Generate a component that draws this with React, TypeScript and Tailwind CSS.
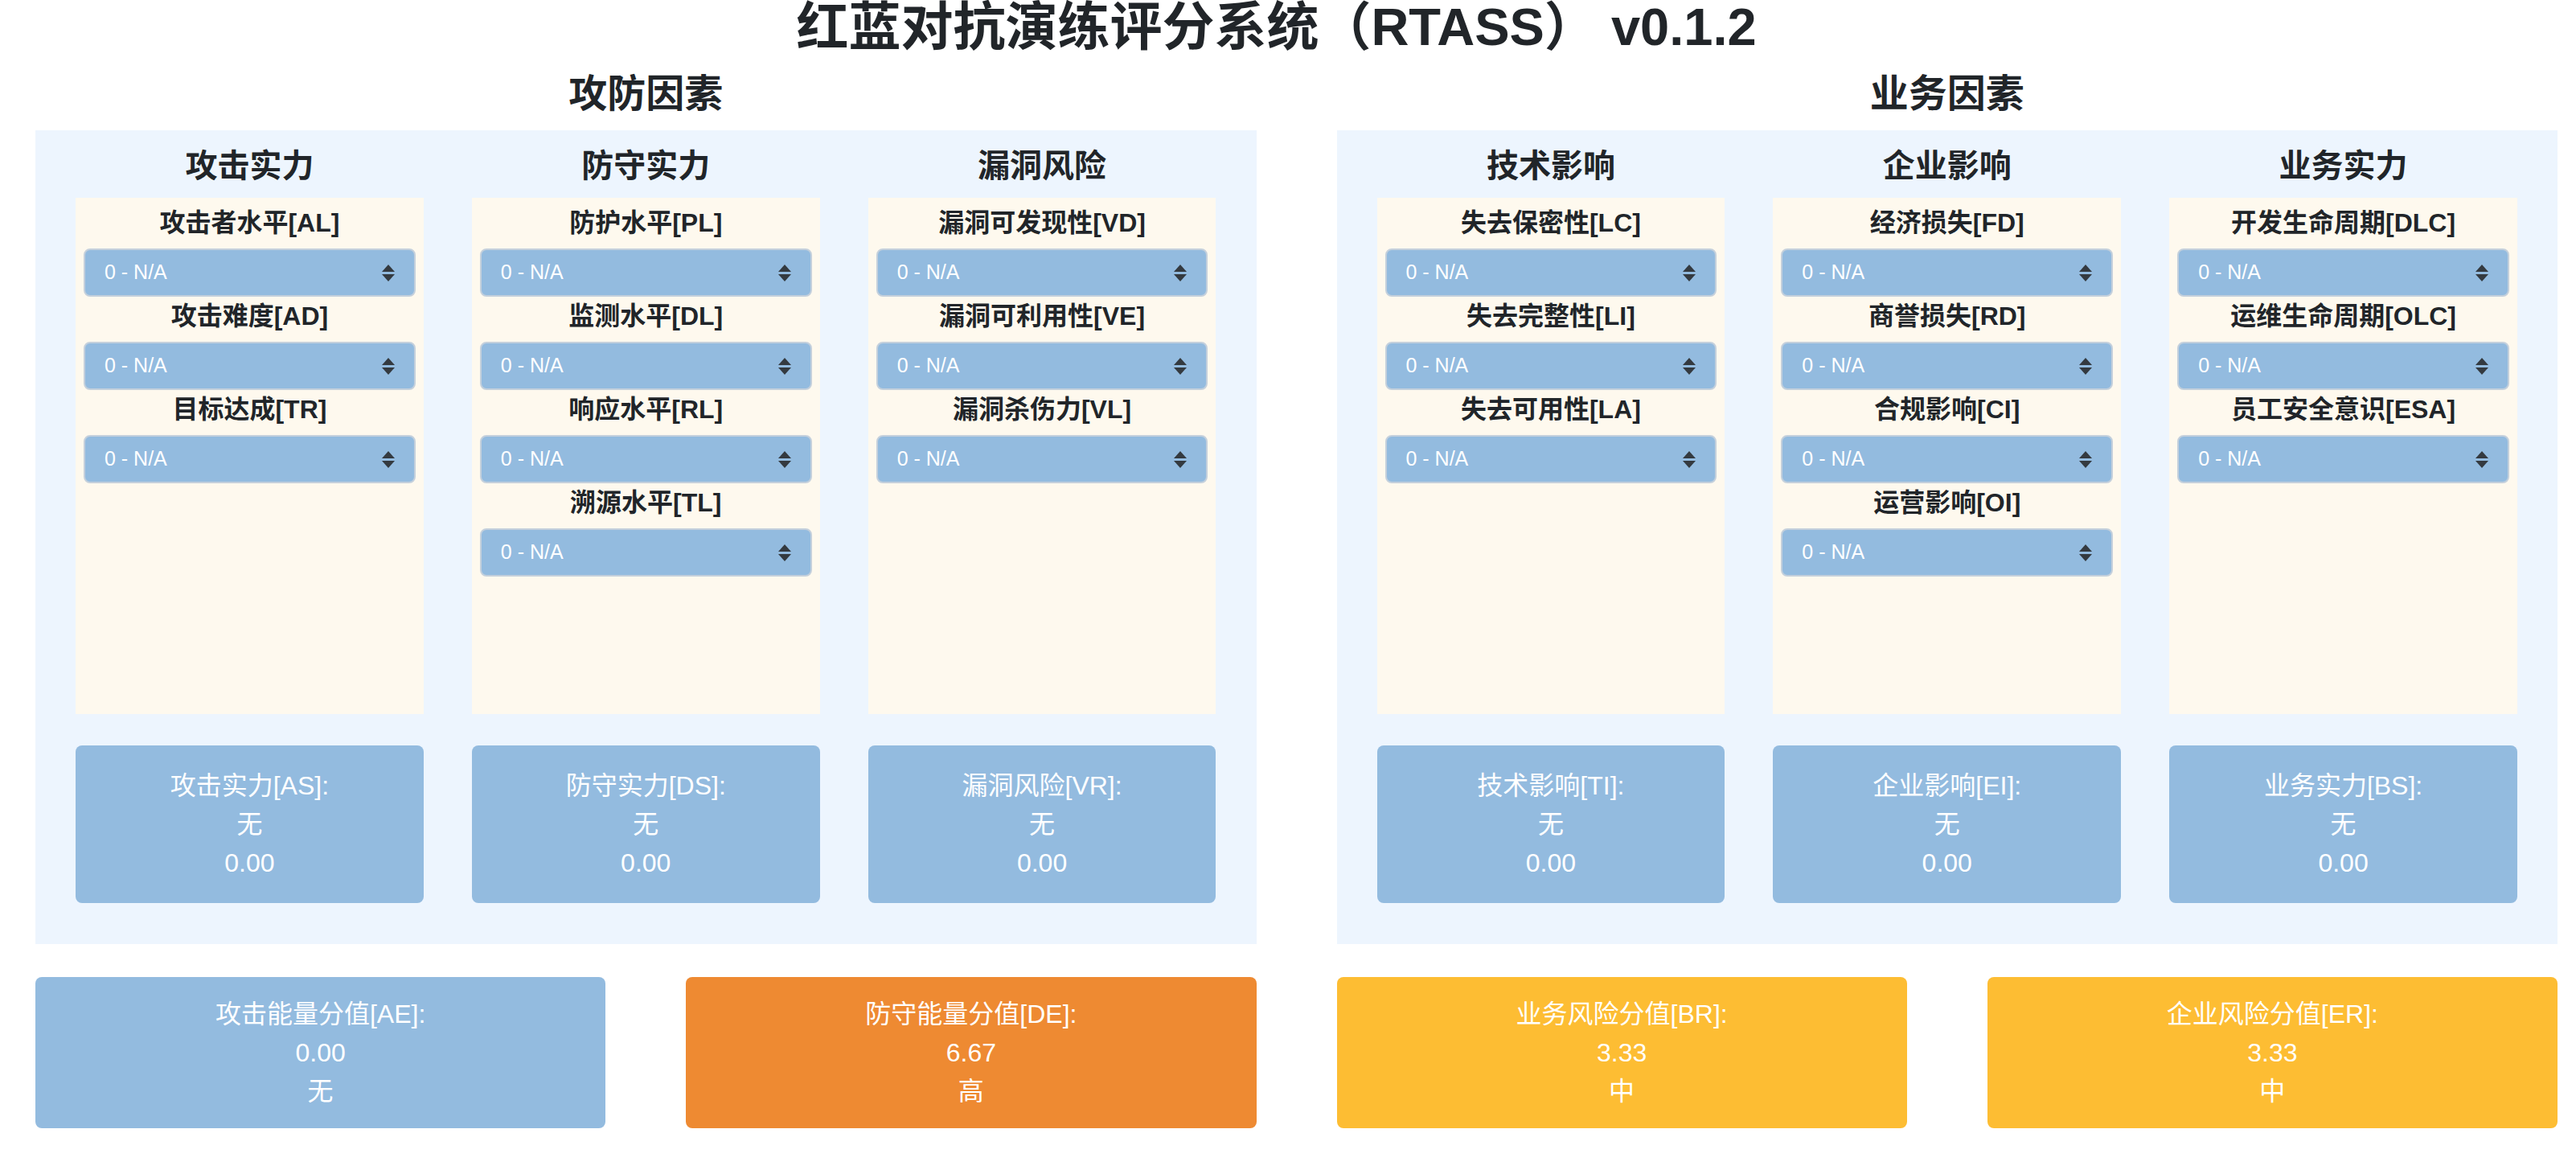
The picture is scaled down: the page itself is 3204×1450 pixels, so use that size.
const font = '[font-family:"Liberation_Sans","Noto_Sans_CJK_SC",sans-serif]';

type Group = { title: string; fields: string[]; result: string };

const attackDefense: Group[] = [
  { title: '攻击实力', fields: ['攻击者水平[AL]', '攻击难度[AD]', '目标达成[TR]'], result: '攻击实力[AS]:' },
  { title: '防守实力', fields: ['防护水平[PL]', '监测水平[DL]', '响应水平[RL]', '溯源水平[TL]'], result: '防守实力[DS]:' },
  { title: '漏洞风险', fields: ['漏洞可发现性[VD]', '漏洞可利用性[VE]', '漏洞杀伤力[VL]'], result: '漏洞风险[VR]:' },
];

const business: Group[] = [
  { title: '技术影响', fields: ['失去保密性[LC]', '失去完整性[LI]', '失去可用性[LA]'], result: '技术影响[TI]:' },
  { title: '企业影响', fields: ['经济损失[FD]', '商誉损失[RD]', '合规影响[CI]', '运营影响[OI]'], result: '企业影响[EI]:' },
  { title: '业务实力', fields: ['开发生命周期[DLC]', '运维生命周期[OLC]', '员工安全意识[ESA]'], result: '业务实力[BS]:' },
];

const scores = [
  { label: '攻击能量分值[AE]:', value: '0.00', level: '无', color: 'bg-[#93bbdf]' },
  { label: '防守能量分值[DE]:', value: '6.67', level: '高', color: 'bg-[#ee8a32]' },
  { label: '业务风险分值[BR]:', value: '3.33', level: '中', color: 'bg-[#fdbd33]' },
  { label: '企业风险分值[ER]:', value: '3.33', level: '中', color: 'bg-[#fdbd33]' },
];

function SortArrows() {
  return (
    <svg width="16" height="21" viewBox="0 0 16 21" className="shrink-0">
      <path d="M8 0 L16 9 L0 9 Z" fill="#343a40" />
      <path d="M0 12 L16 12 L8 21 Z" fill="#343a40" />
    </svg>
  );
}

function Select() {
  return (
    <div className="h-[60px] rounded-lg border-2 border-[#c4d0dc] bg-[#93bbdf] flex items-center justify-between pl-[24px] pr-[24px]">
      <span className="text-[25px] text-white">0 - N/A</span>
      <SortArrows />
    </div>
  );
}

function Column({ group }: { group: Group }) {
  return (
    <div className="flex-1 flex flex-col">
      <h3 className="h-[48px] leading-[48px] text-[40px] font-bold text-center text-[#212529] mb-[16px]">
        {group.title}
      </h3>
      <div className="h-[642px] bg-[#fef9ee] pt-[7px] px-[10px]">
        {group.fields.map((f) => (
          <div key={f}>
            <div className="h-[48px] leading-[48px] text-[32px] font-semibold text-center text-[#212529] mb-[8px]">{f}</div>
            <Select />
          </div>
        ))}
      </div>
      <div className="mt-[39px] h-[196px] rounded-lg bg-[#93bbdf] py-[26px] text-center text-white text-[32px] leading-[48px]">
        <div>{group.result}</div>
        <div>无</div>
        <div>0.00</div>
      </div>
    </div>
  );
}

function Section({ title, groups }: { title: string; groups: Group[] }) {
  return (
    <div className="flex flex-col">
      <h2 className="h-[58px] leading-[58px] text-[48px] font-bold text-center text-[#212529] mb-[16px]">{title}</h2>
      <div className="bg-[#edf5fe] pt-[20px] pb-[51px] px-[50px] flex gap-[60px]">
        {groups.map((g) => (
          <Column key={g.title} group={g} />
        ))}
      </div>
    </div>
  );
}

export default function App() {
  return (
    <div className={`${font} w-[3204px] h-[1450px] bg-white pl-[44px] pr-[23px]`}>
      <h1 className="h-[68px] leading-[68px] text-[65px] font-bold text-center text-[#212529] mb-[20px] pr-[50px]">
        红蓝对抗演练评分系统（RTASS） v0.1.2
      </h1>
      <div className="grid grid-cols-2 gap-[100px]">
        <Section title="攻防因素" groups={attackDefense} />
        <Section title="业务因素" groups={business} />
      </div>
      <div className="grid grid-cols-4 gap-[100px] mt-[41px]">
        {scores.map((s) => (
          <div key={s.label} className={`${s.color} h-[188px] rounded-lg py-[22px] text-center text-white text-[32px] leading-[48px]`}>
            <div>{s.label}</div>
            <div>{s.value}</div>
            <div>{s.level}</div>
          </div>
        ))}
      </div>
    </div>
  );
}
